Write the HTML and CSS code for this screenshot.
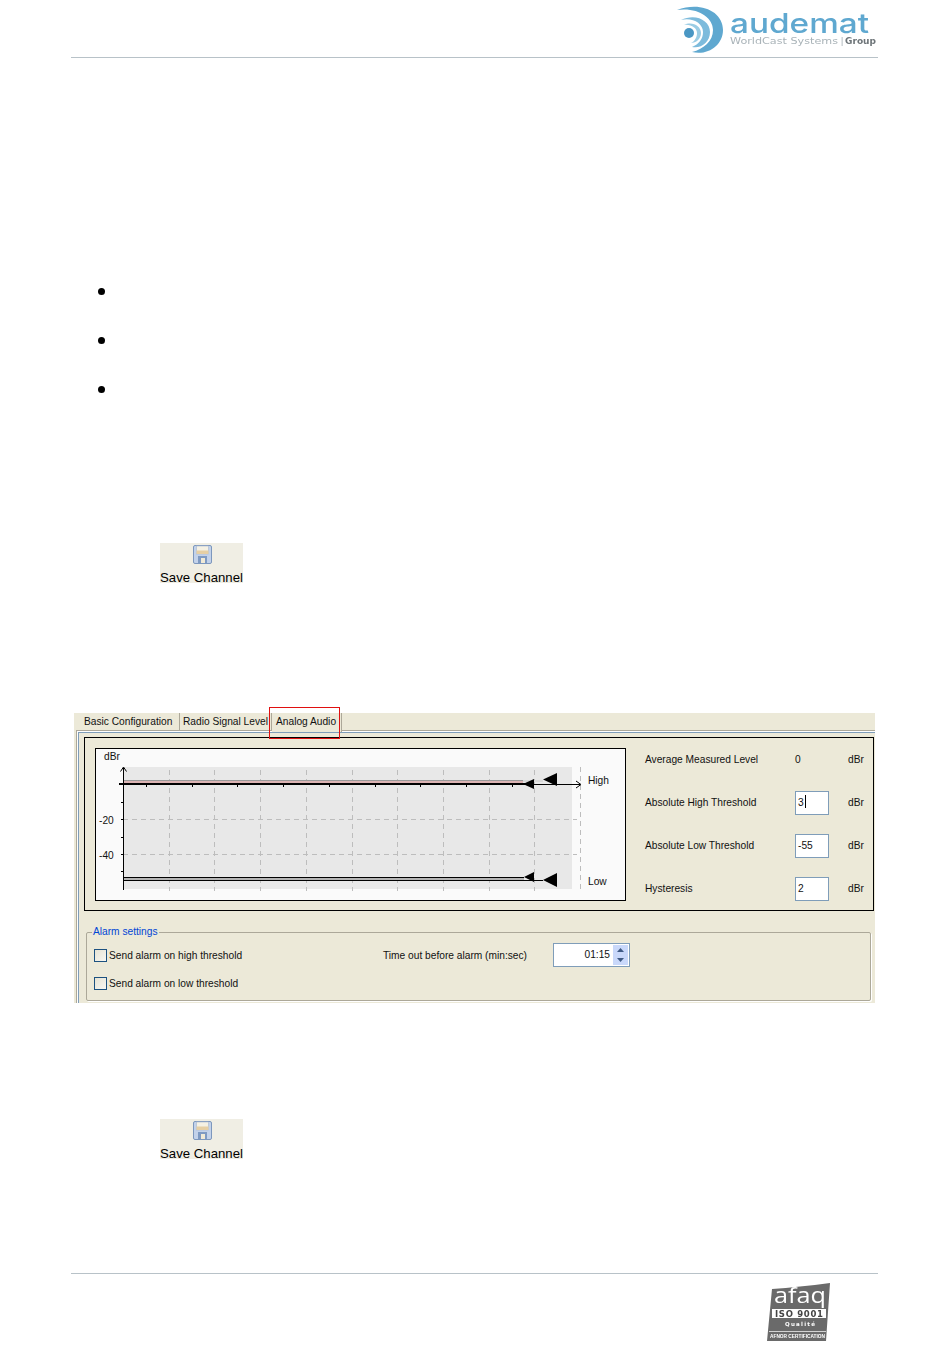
FILE: index.html
```html
<!DOCTYPE html>
<html lang="en">
<head>
<meta charset="utf-8">
<title>Analog Audio</title>
<link rel="stylesheet" href="styles.css">
</head>
<body>
<div class="page">
  <header class="head">
    <svg class="logo" viewBox="677 4 200 50" width="200" height="50" aria-label="audemat logo">
      <path fill="#5fa8d0" d="M677 10C700 1 723 11 723 30C723 45 708 56 692 52C704 49 713 41 713 30C713 17 697 7 677 10Z"/>
      <path fill="#7dbbdc" d="M681 20C695 13 710 20 710 32C710 42 701 49 692 47C699 44 703 39 703 32C703 23 692 17 681 20Z"/>
      <path fill="#9accE4" d="M684 25C692 21 701 26 701 33C701 39 696 43 691 43C695 41 697 37 697 33C697 28 691 24 684 25Z"/>
      <circle cx="689" cy="33" r="5" fill="#4a97c4"/>
      <text class="logo-name" x="730" y="33" textLength="139" lengthAdjust="spacingAndGlyphs">audemat</text>
      <text class="logo-sub" x="730" y="44" textLength="108" lengthAdjust="spacingAndGlyphs">WorldCast Systems</text>
      <text class="logo-sub logo-bar" x="840.500" y="44">|</text>
      <text class="logo-group" x="845" y="44" textLength="31" lengthAdjust="spacingAndGlyphs">Group</text>
    </svg>
  </header>

  <main class="content">
    <ul class="bullets">
      <li class="bullet"></li>
      <li class="bullet"></li>
      <li class="bullet"></li>
    </ul>

    <div class="save save-first">
      <svg class="floppy" viewBox="0 0 20 20" width="20" height="20">
        <rect x="0.5" y="0.5" width="18" height="18" rx="1.5" fill="#c3d2ea" stroke="#7d97bd"/>
        <rect x="3.5" y="1" width="12" height="8" fill="#f5f1e4" stroke="#a9b8cf" stroke-width="0.6"/>
        <rect x="3.5" y="5.5" width="12" height="3.5" fill="#e6cfa4"/>
        <rect x="5" y="11" width="9" height="7.5" fill="#7f9ac2"/>
        <rect x="8" y="13" width="4" height="5" fill="#f1ead6"/>
      </svg>
      <span class="save-label">Save Channel</span>
    </div>

    <section class="panel">
      <div class="tabs">
        <div class="tab tab-basic">Basic Configuration</div>
        <div class="tab tab-radio">Radio Signal Level</div>
        <div class="tab tab-audio">Analog Audio</div>
      </div>
      <div class="highlight"></div>
      <div class="pane">
        <div class="pane-light">
          <div class="pane-body">
            <div class="levels">
              <div class="chart">
                <svg viewBox="96 749 529 151" width="529" height="151">
                  <rect x="123" y="767" width="449" height="122" fill="#e8e8e8"/>
                  <g class="grid">
                    <path d="M169.500 770V891M214.500 770V891M260.500 770V891M306.500 770V891M352.500 770V891M397.500 770V891M443.500 770V891M489.500 770V891M534.500 770V891M580.500 767V891"/>
                    <path d="M123 819.500H577M123 854.500H577"/>
                  </g>
                  <rect x="123" y="780" width="400" height="3" fill="#dcb4b4"/>
                  <path class="line-soft" d="M123 780.500H523"/>
                  <rect x="119" y="783" width="407" height="2" fill="#000"/>
                  <path class="line" d="M526 784.500H580"/>
                  <path class="line" d="M576 781L581 784.500L576 788"/>
                  <rect x="523" y="780" width="20" height="2" fill="#d8d8d8"/>
                  <path class="line" d="M146.500 785V787M192.500 785V787M237.500 785V787M283.500 785V787M329.500 785V787M375.500 785V787M420.500 785V787M466.500 785V787M512.500 785V787M121 802.500H124M121 837.500H124M121 871.500H124M121 819.500H124M121 854.500H124"/>
                  <rect x="123" y="877" width="401" height="4" fill="#b4b4b4"/>
                  <path class="line" d="M123 877.500H524M123 880.500H543"/>
                  <path class="line" d="M123.500 768V890M120.500 771.500L123.500 767L126.500 771.500"/>
                  <path d="M523 784L534 779V789Z"/>
                  <path d="M543 779.500L557 773V786Z"/>
                  <path d="M524 877L534 872V882Z"/>
                  <path d="M543 880L557 873V887Z"/>
                  <text class="chart-text" x="104" y="760">dBr</text>
                  <text class="chart-text" x="99" y="824">-20</text>
                  <text class="chart-text" x="99" y="859">-40</text>
                  <text class="chart-text" x="588" y="784">High</text>
                  <text class="chart-text" x="588" y="885">Low</text>
                </svg>
              </div>
              <div class="params">
                <span>Average Measured Level</span><span>0</span><span>dBr</span>
                <span>Absolute High Threshold</span><div class="field">3<i class="caret"></i></div><span>dBr</span>
                <span>Absolute Low Threshold</span><div class="field">-55</div><span>dBr</span>
                <span>Hysteresis</span><div class="field">2</div><span>dBr</span>
              </div>
            </div>
            <fieldset class="alarm">
              <legend class="alarm-title">Alarm settings</legend>
              <div class="alarm-row">
                <label class="check"><i class="box"></i>Send alarm on high threshold</label>
                <span class="timeout">Time out before alarm (min:sec)</span>
                <div class="spinner">
                  <span class="spin-value">01:15</span>
                  <div class="spin-buttons">
                    <div class="spin-btn"><svg viewBox="0 0 7 4" width="7" height="4"><path d="M0 4L3.500 0L7 4Z" fill="#3f5a85"/></svg></div>
                    <div class="spin-btn"><svg viewBox="0 0 7 4" width="7" height="4"><path d="M0 0L3.500 4L7 0Z" fill="#3f5a85"/></svg></div>
                  </div>
                </div>
              </div>
              <div class="alarm-row">
                <label class="check"><i class="box"></i>Send alarm on low threshold</label>
              </div>
            </fieldset>
          </div>
        </div>
      </div>
    </section>

    <div class="save save-second">
      <svg class="floppy" viewBox="0 0 20 20" width="20" height="20">
        <rect x="0.5" y="0.5" width="18" height="18" rx="1.5" fill="#c3d2ea" stroke="#7d97bd"/>
        <rect x="3.5" y="1" width="12" height="8" fill="#f5f1e4" stroke="#a9b8cf" stroke-width="0.6"/>
        <rect x="3.5" y="5.5" width="12" height="3.5" fill="#e6cfa4"/>
        <rect x="5" y="11" width="9" height="7.5" fill="#7f9ac2"/>
        <rect x="8" y="13" width="4" height="5" fill="#f1ead6"/>
      </svg>
      <span class="save-label">Save Channel</span>
    </div>
  </main>

  <footer class="foot">
    <svg class="afaq" viewBox="768 1282 64 59" width="64" height="59" aria-label="afaq ISO 9001">
      <path fill="#6a6a6a" d="M773 1288Q800 1286 831 1282L827 1340H768Z"/>
      <text class="afaq-name" x="775" y="1302" textLength="52" lengthAdjust="spacingAndGlyphs">afaq</text>
      <rect x="773" y="1308" width="54" height="9" fill="#fff"/>
      <text class="afaq-iso" x="776" y="1315.500" textLength="48" lengthAdjust="spacing">ISO 9001</text>
      <text class="afaq-q" x="786" y="1325" textLength="30" lengthAdjust="spacing">Qualité</text>
      <path d="M770 1330.500H827" stroke="#fff" stroke-width="0.7"/>
      <text class="afaq-c" x="771" y="1337" textLength="55" lengthAdjust="spacingAndGlyphs">AFNOR CERTIFICATION</text>
    </svg>
  </footer>
</div>
</body>
</html>
```
FILE: styles.css
```css
* { box-sizing: border-box; }
html, body { margin: 0; padding: 0; background: #fff; }
body { font-family: "Liberation Sans", Arial, sans-serif; color: #000; }

.page {
  width: 950px;
  height: 1359px;
  padding: 0 72px 0 71px;
  overflow: hidden;
}

.head {
  height: 58px;
  padding-top: 4px;
  display: flex;
  justify-content: flex-end;
  align-items: flex-start;
  border-bottom: 1px solid #b8c2c8;
}
.logo { margin-right: 1px; filter: blur(0.35px); }
.logo-name { font: 500 27px Inter, sans-serif; fill: #5fa8d0; }
.logo-sub { font: 400 9.500px "DejaVu Sans", sans-serif; fill: #a9b3b8; }
.logo-group { font: 700 9.500px "DejaVu Sans", sans-serif; fill: #6d7478; }

.content { padding-left: 3px; }

.bullets { list-style: none; margin: 230px 0 0 24px; padding: 0; display: flex; flex-direction: column; gap: 42px; }
.bullet { width: 7px; height: 7px; border-radius: 50%; background: #000; }

.save {
  width: 83px;
  height: 40px;
  margin-left: 86px;
  background: #f0eee4;
  display: flex;
  flex-direction: column;
  align-items: center;
}
.save-first { margin-top: 150px; }
.save-second { margin-top: 116px; }
.floppy { margin: 2px 0 0 2px; flex: none; }
.save-label { font-size: 13.200px; line-height: 14px; white-space: nowrap; margin-top: 6px; }

.panel {
  position: relative;
  width: 801px;
  height: 290px;
  margin-top: 130px;
  background: #ece9d8;
  font-size: 10.200px;
  color: #111;
}
.tabs { height: 17px; display: flex; }
.tab { line-height: 17px; white-space: nowrap; }
.tab-basic { width: 106px; padding-left: 10px; border-right: 1px solid #aca899; }
.tab-radio { width: 92px; padding-left: 3px; border-right: 1px solid #aca899; }
.tab-audio { width: 70px; height: 19px; padding-left: 4px; border-right: 1px solid #aca899; background: #ece9d8; position: relative; z-index: 1; }
.highlight {
  position: absolute;
  left: 195px;
  top: -6px;
  width: 71px;
  height: 32px;
  border: 1px solid #e01010;
  z-index: 2;
}

.pane { margin-left: 2px; height: 273px; border-top: 1px solid #aca899; border-left: 1px solid #aca899; }
.pane-light { height: 100%; border-top: 1px solid #fff; border-left: 1px solid #fff; }
.pane-body { height: 100%; padding: 4px 0 0 5px; border-top: 1px solid #7f9db9; border-left: 1px solid #7f9db9; }

.levels {
  width: 790px;
  height: 174px;
  padding: 10px 0 0 10px;
  border: 1px solid #000;
  display: flex;
  gap: 19px;
}
.chart { width: 531px; height: 153px; background: #fafafa; border: 1px solid #000; flex: none; }
.chart svg { display: block; }
.grid path { fill: none; stroke: #bdbdbd; stroke-dasharray: 5 4; }
.line { fill: none; stroke: #000; }
.line-soft { fill: none; stroke: #999; }
.chart-text { font: 400 10.200px "Liberation Sans", Arial, sans-serif; fill: #111; }

.params {
  display: grid;
  grid-template-columns: 150px 53px auto;
  grid-auto-rows: 24px;
  row-gap: 19px;
  align-items: center;
  align-content: start;
}
.params span { padding-bottom: 2px; }
.field {
  width: 34px;
  height: 24px;
  padding-left: 2px;
  line-height: 21px;
  background: #fff;
  border: 1px solid #7f9db9;
}
.caret { display: inline-block; width: 1px; height: 13px; background: #000; margin-left: 1px; vertical-align: -2px; }

.alarm {
  width: 785px;
  height: 75px;
  margin: 15px 0 0 2px;
  padding: 5px 5px 5px 7px;
  border: 1px solid #aca899;
  border-radius: 2px;
  box-shadow: 1px 1px 0 #fff;
  min-inline-size: 0;
}
.alarm-title { padding: 0 1px; margin-left: -2px; line-height: 12px; color: #0046d5; }
.alarm-row { height: 24px; display: flex; align-items: center; }
.alarm-row + .alarm-row { margin-top: 4px; }
.check { width: 289px; display: flex; align-items: center; gap: 2px; white-space: nowrap; }
.box { width: 13px; height: 13px; flex: none; border: 1px solid #1c5180; background: linear-gradient(135deg, #e6e3d4, #f8f7f2); }
.timeout { width: 170px; white-space: nowrap; }
.spinner { width: 77px; height: 24px; display: flex; background: #fff; border: 1px solid #7f9db9; padding: 1px; }
.spin-value { flex: 1; text-align: right; line-height: 20px; padding-right: 3px; }
.spin-buttons { width: 15px; display: flex; flex-direction: column; }
.spin-btn { flex: 1; display: flex; align-items: center; justify-content: center; background: #c9d8fa; }
.spin-btn svg { display: block; }

.foot {
  margin-top: 114px;
  padding: 9px 47px 0 0;
  border-top: 1px solid #b8c2c8;
  display: flex;
  justify-content: flex-end;
}
.afaq { filter: blur(0.3px); overflow: visible; }
.afaq-name { font: 400 22px "Open Sans", sans-serif; fill: #fff; }
.afaq-iso { font: 700 8.500px "DejaVu Sans", sans-serif; fill: #444; }
.afaq-q { font: 700 5.500px "DejaVu Sans", sans-serif; fill: #fff; }
.afaq-c { font: 700 4.500px "Liberation Sans", sans-serif; fill: #fff; }
```
